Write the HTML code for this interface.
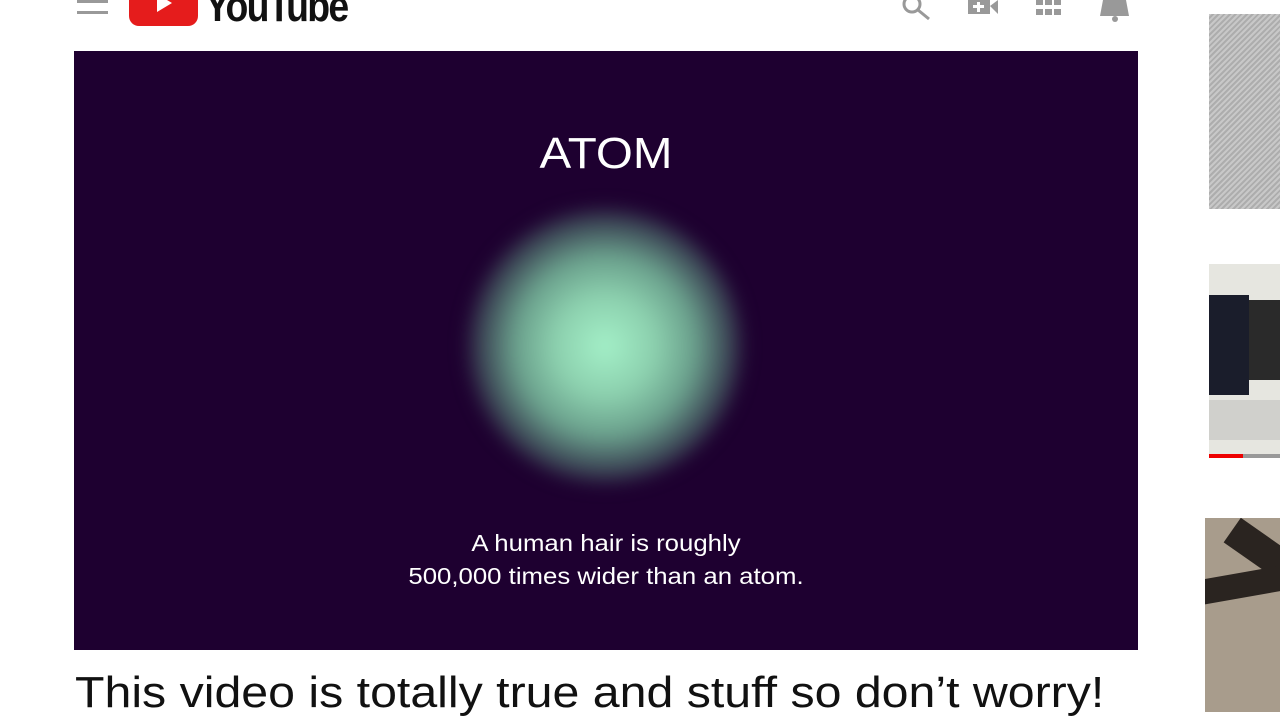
<!DOCTYPE html>
<html><head><meta charset="utf-8"><style>
body{margin:0;width:1280px;height:720px;overflow:hidden;background:#fff;position:relative;font-family:"Liberation Sans",sans-serif}
.abs{position:absolute}
</style></head><body>
<div class="abs" style="left:77px;top:0;width:31px;height:3px;background:#999"></div>
<div class="abs" style="left:77px;top:11px;width:31px;height:3px;background:#999"></div>
<div class="abs" style="left:129px;top:-14px;width:69px;height:40px;background:#e51c1c;border-radius:10px"></div>
<div class="abs" style="left:157px;top:-6px;width:0;height:0;border-left:15px solid #fff;border-top:9px solid transparent;border-bottom:9px solid transparent"></div>
<div class="abs" style="left:205px;top:-18px;font-size:44px;font-weight:bold;letter-spacing:-2px;transform:scaleX(0.85);transform-origin:left;color:#111">YouTube</div>
<svg class="abs" style="left:900px;top:0" width="240" height="24">
<circle cx="12" cy="4" r="8" fill="none" stroke="#999" stroke-width="3"/><line x1="18" y1="10" x2="29" y2="19" stroke="#999" stroke-width="3"/>
<rect x="68" y="0" width="22" height="14" fill="#999"/><polygon points="90,6 98,0 98,14" fill="#999"/><rect x="77" y="2" width="3" height="10" fill="#fff"/><rect x="73" y="5" width="11" height="3" fill="#fff"/>
<g fill="#999"><rect x="136" y="0" width="7" height="5"/><rect x="145" y="0" width="7" height="5"/><rect x="154" y="0" width="7" height="5"/><rect x="136" y="9" width="7" height="6"/><rect x="145" y="9" width="7" height="6"/><rect x="154" y="9" width="7" height="6"/></g>
<path d="M203 0 L226 0 L229 16 L200 16 Z" fill="#999"/><circle cx="215" cy="19" r="3" fill="#999"/>
</svg>
<div class="abs" style="left:74px;top:51px;width:1064px;height:599px;background:#1e0030;overflow:hidden">
<div class="abs" style="left:0;top:78px;width:1064px;text-align:center;color:#fff;font-size:44px;transform:scaleX(1.08)">ATOM</div>
<div class="abs" style="left:391px;top:155px;width:280px;height:280px;border-radius:50%;filter:blur(8px);background:radial-gradient(circle,#a4f0c8 0%,#8cd0ae 25%,#6aa08c 45%,#3e4a58 62%,rgba(30,0,48,0.5) 73%,rgba(30,0,48,0) 82%)"></div>
<div class="abs" style="left:0;top:476px;width:1064px;text-align:center;color:#fff;font-size:23px;line-height:33px;transform:scaleX(1.12)">A human hair is roughly<br>500,000 times wider than an atom.</div>
</div>
<div class="abs" style="left:75px;top:668px;font-size:44px;color:#111;white-space:nowrap;transform:scaleX(1.097);transform-origin:left">This video is totally true and stuff so don’t worry!</div>
<div class="abs" style="left:1209px;top:14px;width:71px;height:195px;background:repeating-linear-gradient(135deg,#c8c8c8 0 2px,#adadad 2px 4px)"></div>
<div class="abs" style="left:1209px;top:264px;width:71px;height:190px;background:#e6e6e0"></div>
<div class="abs" style="left:1209px;top:295px;width:40px;height:100px;background:#1a1d2b"></div>
<div class="abs" style="left:1249px;top:300px;width:31px;height:80px;background:#2a2a2a"></div>
<div class="abs" style="left:1209px;top:400px;width:71px;height:40px;background:#d0d0cc"></div>
<div class="abs" style="left:1209px;top:454px;width:34px;height:4px;background:#e00"></div>
<div class="abs" style="left:1243px;top:454px;width:37px;height:4px;background:#999"></div>
<div class="abs" style="left:1205px;top:518px;width:75px;height:194px;background:#a89c8c;overflow:hidden">
<div class="abs" style="left:20px;top:20px;width:80px;height:30px;background:#2a2420;transform:rotate(35deg)"></div>
<div class="abs" style="left:-10px;top:55px;width:90px;height:25px;background:#2a2420;transform:rotate(-10deg)"></div>
</div>
</body></html>
